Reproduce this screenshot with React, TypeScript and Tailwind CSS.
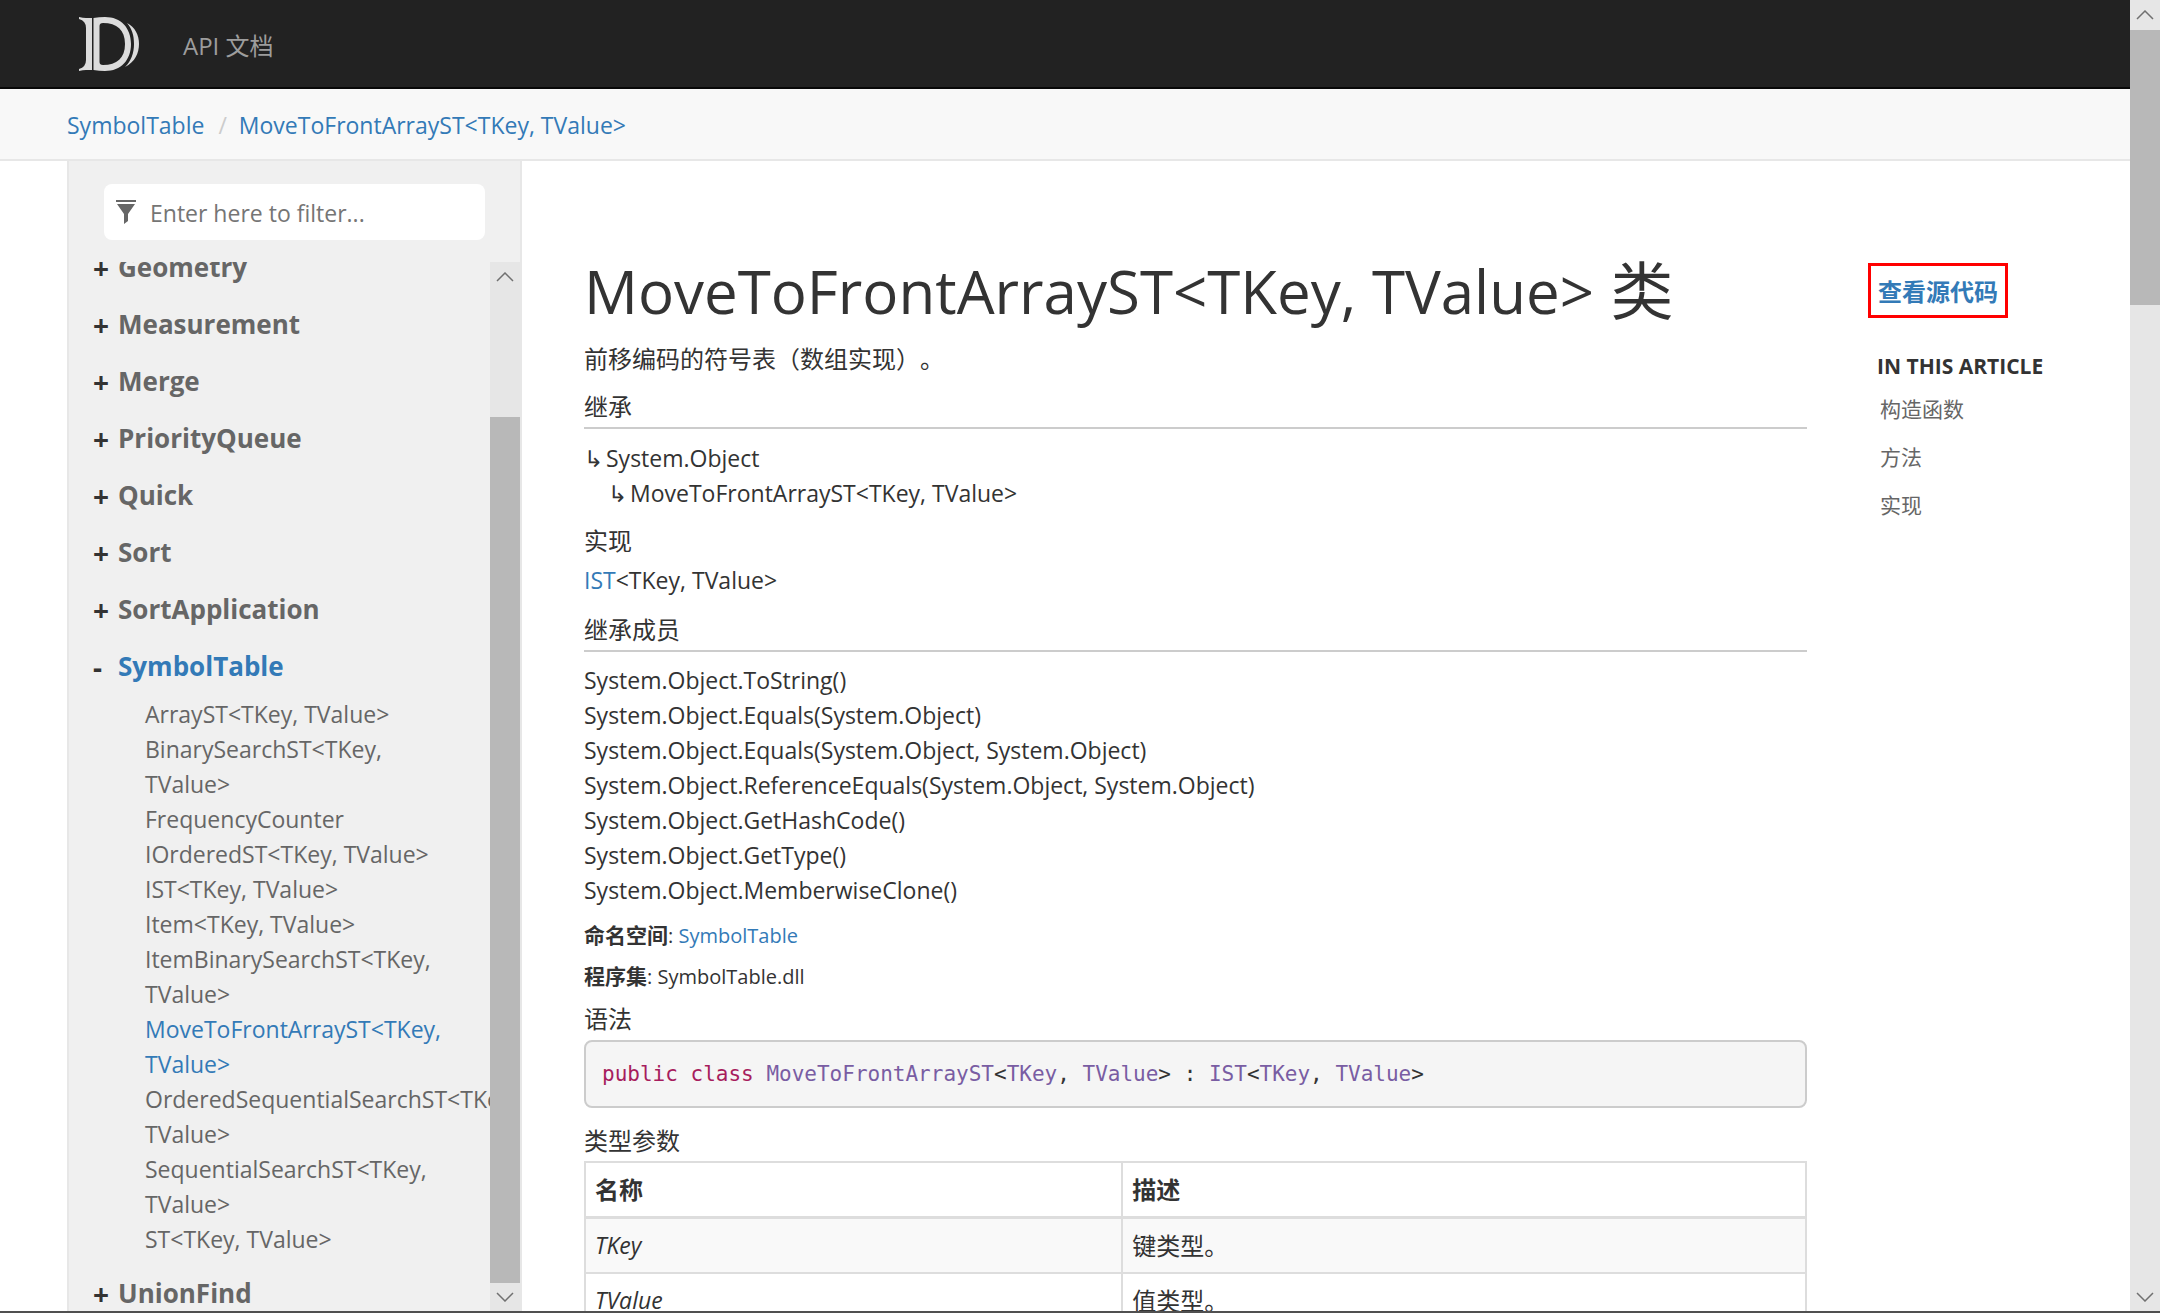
import { useState } from "react";

const kinds = { kw: "text-[#a71d5d]", type: "text-[#795da3]", plain: "text-[#333333]" };

const groupsBefore = ["Geometry", "Measurement", "Merge", "PriorityQueue", "Quick", "Sort", "SortApplication"];

const symbolTableTypes = [
  "ArrayST<TKey, TValue>",
  "BinarySearchST<TKey, TValue>",
  "FrequencyCounter",
  "IOrderedST<TKey, TValue>",
  "IST<TKey, TValue>",
  "Item<TKey, TValue>",
  "ItemBinarySearchST<TKey, TValue>",
  "MoveToFrontArrayST<TKey, TValue>",
  "OrderedSequentialSearchST<TKey, TValue>",
  "SequentialSearchST<TKey, TValue>",
  "ST<TKey, TValue>",
];

const inheritedMembers = [
  "System.Object.ToString()",
  "System.Object.Equals(System.Object)",
  "System.Object.Equals(System.Object, System.Object)",
  "System.Object.ReferenceEquals(System.Object, System.Object)",
  "System.Object.GetHashCode()",
  "System.Object.GetType()",
  "System.Object.MemberwiseClone()",
];

const syntax: [keyof typeof kinds, string][] = [
  ["kw", "public"],
  ["plain", " "],
  ["kw", "class"],
  ["plain", " "],
  ["type", "MoveToFrontArrayST"],
  ["plain", "<"],
  ["type", "TKey"],
  ["plain", ", "],
  ["type", "TValue"],
  ["plain", "> : "],
  ["type", "IST"],
  ["plain", "<"],
  ["type", "TKey"],
  ["plain", ", "],
  ["type", "TValue"],
  ["plain", ">"],
];

function Logo() {
  return (
    <svg className="h-[54px] w-[60px]" viewBox="0 0 60 54" fill="#dcdcdc" aria-hidden="true">
      <path d="M0 0Q4 1 7 1H13V53H7Q4 53 0 54V52Q7 50 7 43V11Q7 4 0 2Z" />
      <path fillRule="evenodd" d="M14.500 1Q20 0 26 0C42 0 52 11 52 27S42 54 26 54Q20 54 14.500 53ZM20.500 9V45Q20.500 48 24 48C38 48 46 41 46 27S38 6 24 6Q20.500 6 20.500 9Z" />
      <path d="M48 6C56 10 60 18 60 27S56 45 46 50C52 44 55 36 55 27S53 12 48 6Z" />
    </svg>
  );
}

function Chevron({ down = false }: { down?: boolean }) {
  return (
    <svg className="h-[10px] w-[18px]" viewBox="0 0 18 10" fill="none" stroke="#707070" strokeWidth="1.500" aria-hidden="true">
      <path d={down ? "M1 1L9 9L17 1" : "M1 9L9 1L17 9"} />
    </svg>
  );
}

function ScrollBar({ label, children }: { label: string; children: React.ReactNode }) {
  return (
    <div className="flex w-[30px] shrink-0 flex-col bg-[#e6e6e6]">
      <button type="button" aria-label={`${label} up`} className="flex h-[30px] shrink-0 items-center justify-center">
        <Chevron />
      </button>
      <div className="flex min-h-0 flex-1 flex-col">{children}</div>
      <button type="button" aria-label={`${label} down`} className="flex h-[28px] shrink-0 items-center justify-center">
        <Chevron down />
      </button>
    </div>
  );
}

function Group({ name, open = false, children }: { name: string; open?: boolean; children?: React.ReactNode }) {
  return (
    <li className={open ? "mb-[17px]" : "mb-[19px]"}>
      <div className="flex h-[38px] items-center">
        <button type="button" aria-expanded={open} aria-label={`Toggle ${name}`} className="w-[25px] pt-px text-left text-[28px] font-bold text-[#333333]">
          {open ? "-" : "+"}
        </button>
        <a href="#" className={open ? "text-[26px] font-bold text-[#337ab7]" : "text-[26px] font-bold text-[#666666]"}>
          {name}
        </a>
      </div>
      {children}
    </li>
  );
}

function Sidebar() {
  const [filter, setFilter] = useState("");
  return (
    <aside className="flex min-h-0 w-[455px] shrink-0 flex-col border-x-2 border-[#e7e7e7] bg-[#f0f0f0]">
      <div className="px-[35px] pt-[23px] pb-[22px]">
        <label className="flex h-14 items-center rounded-lg bg-white pl-3">
          <svg className="h-6 w-5 shrink-0" viewBox="0 0 20 24" fill="#666666" aria-hidden="true">
            <path d="M0 0H20V2H0ZM1 4H19L12 14V21L8 24V14Z" />
          </svg>
          <input
            aria-label="Filter"
            placeholder="Enter here to filter..."
            value={filter}
            onChange={(e) => setFilter(e.target.value)}
            className="ml-[14px] min-w-0 flex-1 bg-transparent pt-[2px] text-[23px] outline-none placeholder:text-[#757575]"
          />
        </label>
      </div>
      <div className="flex min-h-0 flex-1">
        <nav className="flex min-h-0 flex-1 flex-col overflow-hidden pl-6">
          <ul className="-mt-[14px]">
            {groupsBefore.map((name) => (
              <Group key={name} name={name} />
            ))}
            <Group name="SymbolTable" open>
              <ul className="mt-3 ml-[52px] w-[310px]">
                {symbolTableTypes.map((name) => (
                  <li key={name} className="text-[23px] leading-[35px]">
                    <a href="#" className={name.startsWith("Move") ? "text-[#337ab7]" : "text-[#666666]"}>
                      {name}
                    </a>
                  </li>
                ))}
              </ul>
            </Group>
            <Group name="UnionFind" />
          </ul>
        </nav>
        <ScrollBar label="Scroll contents">
          <div className="flex-[125]" />
          <div className="flex-[866] bg-[#b8b8b8]" />
        </ScrollBar>
      </div>
    </aside>
  );
}

function Inherited({ children }: { children: React.ReactNode }) {
  return (
    <div className="flex">
      <span className="w-[22px] text-[23px]">↳</span>
      {children}
    </div>
  );
}

function Article() {
  return (
    <article className="min-w-0 flex-1 pt-[87px]">
      <h1 className="text-[60px] leading-[84px]">
        MoveToFrontArrayST&lt;TKey, TValue&gt;<span className="text-[63px]"> 类</span>
      </h1>
      <p className="mt-2 text-2xl leading-[35px] [text-spacing-trim:space-all]">前移编码的符号表（数组实现）。</p>
      <h2 className="mt-3 border-b-2 border-[#cccccc] pb-px text-2xl leading-[38px]">继承</h2>
      <div className="mt-3 text-[23px] leading-[35px]">
        <Inherited>System.Object</Inherited>
        <div className="pl-6">
          <Inherited>MoveToFrontArrayST&lt;TKey, TValue&gt;</Inherited>
        </div>
      </div>
      <h2 className="mt-[11px] text-2xl leading-[38px]">实现</h2>
      <div className="text-[23px] leading-10">
        <a href="#" className="text-[#337ab7]">IST</a>&lt;TKey, TValue&gt;
      </div>
      <h2 className="mt-[11px] border-b-2 border-[#cccccc] pb-px text-2xl leading-[38px]">继承成员</h2>
      <div className="mt-[11px] text-[23px] leading-[35px]">
        {inheritedMembers.map((m) => (
          <div key={m}>{m}</div>
        ))}
      </div>
      <p className="mt-3 text-[20px] leading-[30px]">
        <strong className="text-[21px]">命名空间</strong>: <a href="#" className="text-[#337ab7]">SymbolTable</a>
      </p>
      <p className="mt-[10px] text-[20px] leading-[30px]">
        <strong className="text-[21px]">程序集</strong>: SymbolTable.dll
      </p>
      <h2 className="mt-2 text-2xl leading-[38px]">语法</h2>
      <pre className="mt-[2px] rounded-lg border-2 border-[#cccccc] bg-[#f5f5f5] px-4 pt-[17px] pb-[15px] text-[21px] leading-[31px]">
        <code className="font-['DejaVu_Sans_Mono',monospace]">
          {syntax.map(([kind, text], i) => (
            <span key={i} className={kinds[kind]}>{text}</span>
          ))}
        </code>
      </pre>
      <h2 className="mt-[14px] text-2xl leading-[38px]">类型参数</h2>
      <table className="mt-px w-full border-collapse text-2xl leading-[35px]">
        <thead>
          <tr className="text-left">
            <th className="w-[44%] border-2 border-b-[3px] border-[#dddddd] px-[9px] py-[9px]">名称</th>
            <th className="border-2 border-b-[3px] border-[#dddddd] px-[9px] py-[9px]">描述</th>
          </tr>
        </thead>
        <tbody>
          <tr className="bg-[#f9f9f9]">
            <td className="border-2 border-[#dddddd] px-[9px] py-[9px] text-[23px] italic">TKey</td>
            <td className="border-2 border-[#dddddd] px-[9px] py-[9px]">键类型。</td>
          </tr>
          <tr>
            <td className="border-2 border-[#dddddd] px-[9px] py-[9px] text-[23px] italic">TValue</td>
            <td className="border-2 border-[#dddddd] px-[9px] py-[9px]">值类型。</td>
          </tr>
        </tbody>
      </table>
    </article>
  );
}

export default function App() {
  return (
    <div className="flex h-screen flex-col overflow-hidden bg-white font-['Open_Sans','Noto_Sans_CJK_SC',sans-serif] text-[#333333]">
      <div className="flex min-h-0 flex-1">
        <div className="flex min-h-0 min-w-0 flex-1 flex-col">
          <header className="flex h-[89px] shrink-0 items-center border-b-2 border-[#080808] bg-[#222222] pl-[79px]">
            <a href="#" aria-label="Home"><Logo /></a>
            <a href="#" className="ml-11 pt-1 text-2xl text-[#9d9d9d]">API 文档</a>
          </header>
          <nav className="flex h-[72px] shrink-0 items-center border-b-2 border-[#e7e7e7] bg-[#f8f8f8] pt-[3px] pl-[67px] text-[23px] text-[#337ab7]">
            <a href="#">SymbolTable</a>
            <span className="mr-3 ml-[14px] text-[#cccccc]">/</span>
            <a href="#">MoveToFrontArrayST&lt;TKey, TValue&gt;</a>
          </nav>
          <div className="flex min-h-0 flex-1 pl-[67px]">
            <Sidebar />
            <main className="flex min-h-0 min-w-0 flex-1 overflow-hidden pl-[62px]">
              <Article />
              <aside className="ml-[61px] w-[262px] shrink-0 pt-[102px]">
                <a href="#" className="inline-flex h-[55px] items-center border-[3px] border-[#ff0000] px-[7px] pt-[2px] text-2xl font-bold text-[#337ab7]">
                  查看源代码
                </a>
                <h5 className="mt-[33px] ml-[9px] text-[21px] leading-[30px] font-bold">IN THIS ARTICLE</h5>
                <ul className="mt-[13px] ml-3 flex flex-col gap-[18px] text-[21px] leading-[30px] text-[#666666]">
                  <li><a href="#">构造函数</a></li>
                  <li><a href="#">方法</a></li>
                  <li><a href="#">实现</a></li>
                </ul>
              </aside>
            </main>
          </div>
        </div>
        <ScrollBar label="Scroll page">
          <div className="flex-[275] bg-[#b8b8b8]" />
          <div className="flex-[978]" />
        </ScrollBar>
      </div>
      <div className="h-[2px] shrink-0 bg-[#505050]" />
    </div>
  );
}
